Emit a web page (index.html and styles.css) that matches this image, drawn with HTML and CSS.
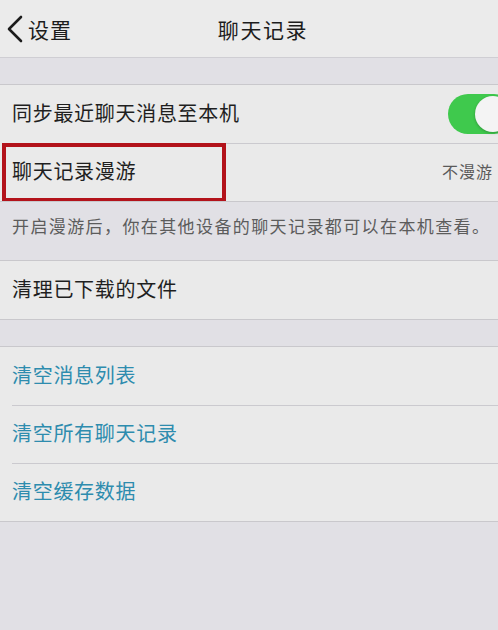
FILE: index.html
```
<!DOCTYPE html>
<html lang="zh-CN">
<head>
<meta charset="utf-8">
<title>聊天记录</title>
<link rel="stylesheet" href="styles.css">
</head>
<body>
<div class="screen">
  <header class="nav">
    <div class="back">
      <svg class="chev" width="18" height="28" viewBox="0 0 18 28"><path d="M15 2 L3 14 L15 26" fill="none" stroke="#1c1c1c" stroke-width="2.6" stroke-linecap="round" stroke-linejoin="round"/></svg>
      <span>设置</span>
    </div>
    <div class="title">聊天记录</div>
  </header>

  <section class="group first">
    <div class="row">
      <span class="label">同步最近聊天消息至本机</span>
      <span class="toggle"><span class="knob"></span></span>
    </div>
    <div class="row sep">
      <span class="label">聊天记录漫游</span>
      <span class="value">不漫游</span>
      <span class="mark"></span>
    </div>
  </section>
  <div class="footnote">开启漫游后，你在其他设备的聊天记录都可以在本机查看。</div>

  <section class="group">
    <div class="row">
      <span class="label">清理已下载的文件</span>
    </div>
  </section>

  <section class="group spaced">
    <div class="row"><span class="label link">清空消息列表</span></div>
    <div class="row sep"><span class="label link">清空所有聊天记录</span></div>
    <div class="row sep"><span class="label link">清空缓存数据</span></div>
  </section>
</div>
</body>
</html>
```
FILE: styles.css
```
* { box-sizing: border-box; margin: 0; padding: 0; }
html, body { width: 498px; height: 630px; overflow: hidden; }
body {
  background: #e1e0e5;
  font-family: "Noto Sans CJK SC", "Noto Sans", sans-serif;
  color: #1f1f1f;
}
.screen { display: flex; flex-direction: column; }
.nav {
  height: 58px;
  background: #ebebeb;
  border-bottom: 1px solid #cfced3;
  display: flex;
  align-items: center;
  justify-content: center;
  position: relative;
}
.back {
  position: absolute;
  left: 6px;
  top: 0;
  height: 57px;
  display: flex;
  align-items: center;
  gap: 4px;
  font-size: 21px;
  letter-spacing: 1px;
  color: #1c1c1c;
}
.chev { display: block; margin-top: 1px; }
.title {
  font-size: 21px;
  letter-spacing: 1.6px;
  color: #1c1c1c;
  margin-left: 28px;
}
.group {
  background: #eaeaea;
  border-top: 1px solid #c9c8cc;
  border-bottom: 1px solid #c9c8cc;
  display: flex;
  flex-direction: column;
}
.group.first { margin-top: 26px; }
.group.spaced { margin-top: 26px; }
.row {
  height: 58px;
  display: flex;
  align-items: center;
  padding-left: 12px;
  padding-bottom: 3px;
  position: relative;
  overflow: hidden;
}
.row.sep::before {
  content: "";
  position: absolute;
  left: 12px;
  right: 0;
  top: 0;
  border-top: 1px solid #cbcacf;
}
.label {
  font-size: 20px;
  letter-spacing: 0.7px;
  flex: 1;
}
.link { color: #2e8cae; }
.value {
  font-size: 16px;
  letter-spacing: 1px;
  color: #5a5a5a;
  margin-right: 5px;
}
.toggle {
  width: 66px;
  height: 40px;
  border-radius: 20px;
  background: #3fc94d;
  margin-right: -16px;
  margin-top: 3px;
  position: relative;
  flex: none;
}
.knob {
  position: absolute;
  left: 27px;
  top: 2px;
  width: 36px;
  height: 36px;
  border-radius: 50%;
  background: #f4f4f4;
  box-shadow: 0 1px 3px rgba(0,0,0,0.25);
}
.mark {
  position: absolute;
  left: 2px;
  top: 0;
  width: 224px;
  height: 59px;
  border: 4px solid #b3131b;
  pointer-events: none;
}
.footnote {
  height: 58px;
  padding: 11px 12px 0;
  font-size: 17px;
  letter-spacing: 1.4px;
  color: #5c5c5c;
  white-space: nowrap;
}
```
